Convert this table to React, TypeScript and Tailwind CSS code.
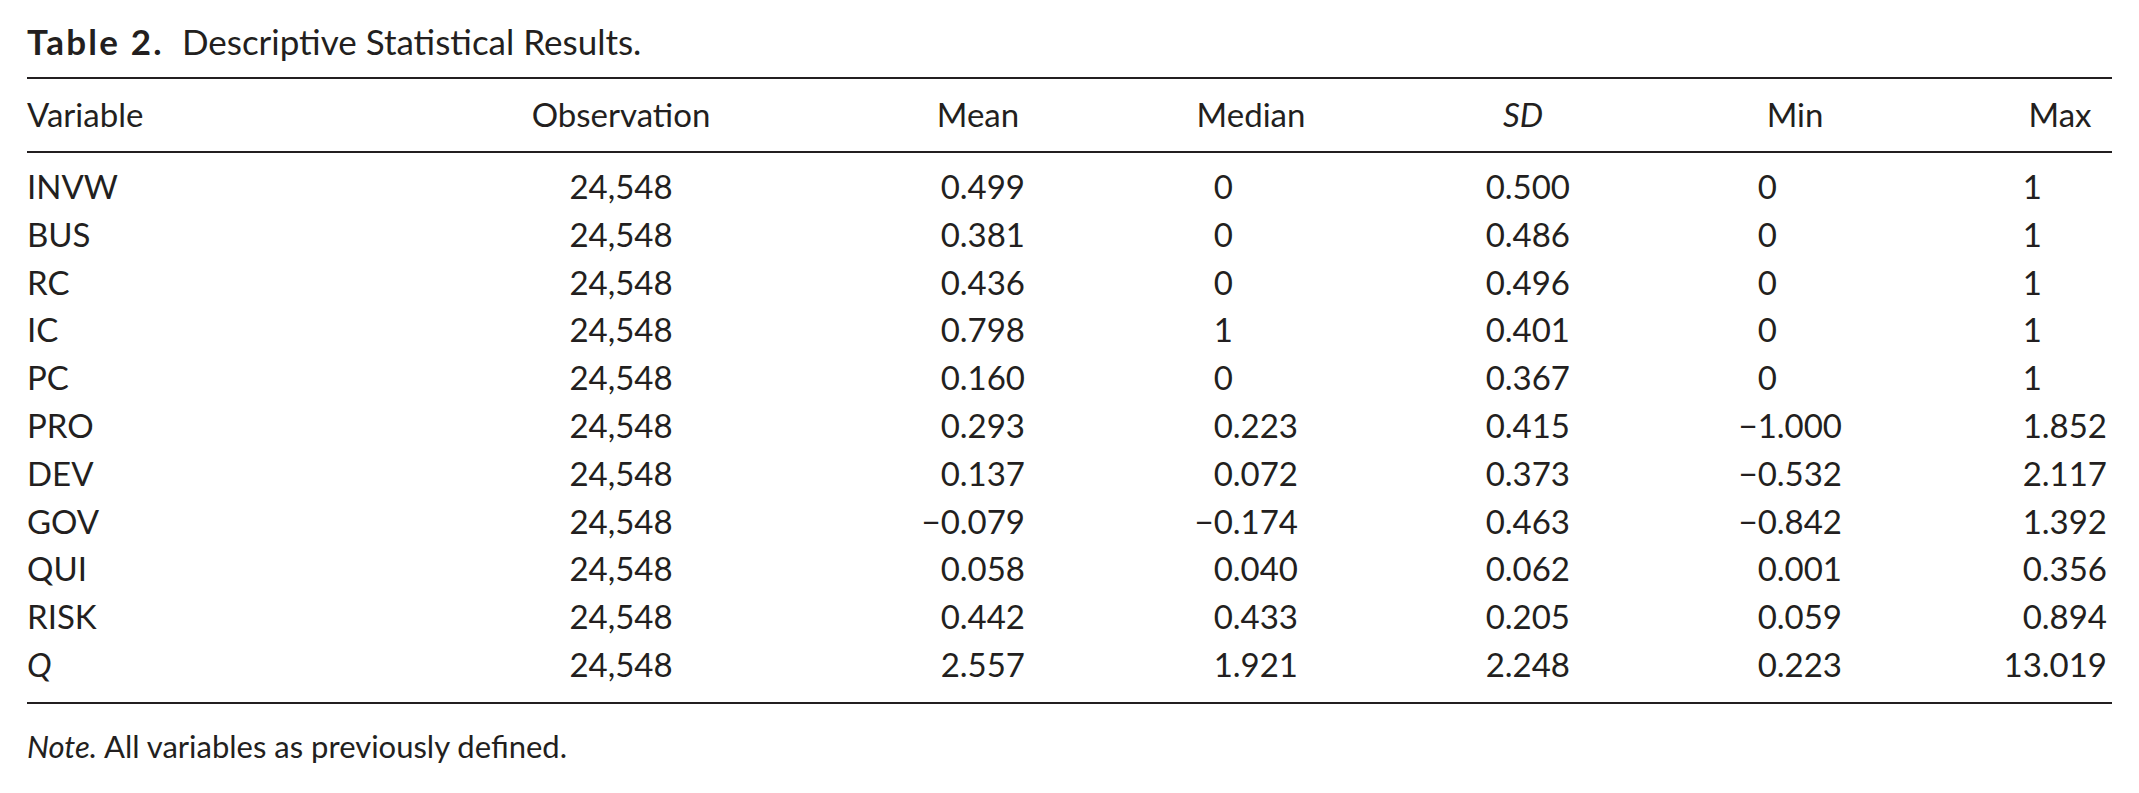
const MINUS = "\u2212";

type Row = {
  name: string;
  italic?: boolean;
  obs: string;
  vals: string[];
};

const rows: Row[] = [
  { name: "INVW", obs: "24,548", vals: ["0.499", "0", "0.500", "0", "1"] },
  { name: "BUS", obs: "24,548", vals: ["0.381", "0", "0.486", "0", "1"] },
  { name: "RC", obs: "24,548", vals: ["0.436", "0", "0.496", "0", "1"] },
  { name: "IC", obs: "24,548", vals: ["0.798", "1", "0.401", "0", "1"] },
  { name: "PC", obs: "24,548", vals: ["0.160", "0", "0.367", "0", "1"] },
  { name: "PRO", obs: "24,548", vals: ["0.293", "0.223", "0.415", `${MINUS}1.000`, "1.852"] },
  { name: "DEV", obs: "24,548", vals: ["0.137", "0.072", "0.373", `${MINUS}0.532`, "2.117"] },
  { name: "GOV", obs: "24,548", vals: [`${MINUS}0.079`, `${MINUS}0.174`, "0.463", `${MINUS}0.842`, "1.392"] },
  { name: "QUI", obs: "24,548", vals: ["0.058", "0.040", "0.062", "0.001", "0.356"] },
  { name: "RISK", obs: "24,548", vals: ["0.442", "0.433", "0.205", "0.059", "0.894"] },
  { name: "Q", italic: true, obs: "24,548", vals: ["2.557", "1.921", "2.248", "0.223", "13.019"] },
];

const headers = [
  { label: "Mean" },
  { label: "Median" },
  { label: "SD", italic: true },
  { label: "Min" },
  { label: "Max" },
];

const cols = "grid grid-cols-[494px_397px_273px_272px_272px_265px_1fr]";

// decimal aligned number: integers get an invisible ".000"
const Num = ({ v }: { v: string }) => {
  const isInt = !v.includes(".");
  return (
    <div className="w-[120px] flex justify-end pr-[13px] whitespace-nowrap">
      <span>{v}</span>
      {isInt && <span className="invisible">.000</span>}
    </div>
  );
};

export default function App() {
  return (
    <div className="w-[2139px] h-[793px] bg-white text-[#231f20] font-['Lato','Liberation_Sans',sans-serif]">
      <div className="px-[27px]">
        {/* caption */}
        <div className="pt-[17px] h-[65px] leading-[48px] text-[35px] whitespace-nowrap">
          <span className="font-bold tracking-[2.2px]">Table 2.</span>
          <span className="ml-[18px]">Descriptive Statistical Results.</span>
        </div>

        <div className="mt-[12px] border-t-2 border-[#231f20] text-[33px]">
          {/* header */}
          <div className={`${cols} h-[74px] items-center border-b-2 border-[#231f20]`}>
            <div>Variable</div>
            <div className="w-[200px] text-center">Observation</div>
            {headers.map((h) => (
              <div key={h.label} className={`w-[120px] text-center ${h.italic ? "italic" : ""}`}>
                {h.label}
              </div>
            ))}
          </div>

          {/* body */}
          <div className="pt-[9px] pb-[14px] border-b-2 border-[#231f20]">
            {rows.map((r) => (
              <div key={r.name} className={`${cols} h-[47.8px] items-center`}>
                <div className={r.italic ? "italic" : ""}>{r.name}</div>
                <div className="w-[200px] text-center">{r.obs}</div>
                {r.vals.map((v, i) => (
                  <Num key={i} v={v} />
                ))}
              </div>
            ))}
          </div>
        </div>

        {/* note */}
        <div className="mt-[18px] h-[48px] leading-[48px] text-[31px]">
          <span className="italic">Note.</span> All variables as previously defined.
        </div>
      </div>
    </div>
  );
}
